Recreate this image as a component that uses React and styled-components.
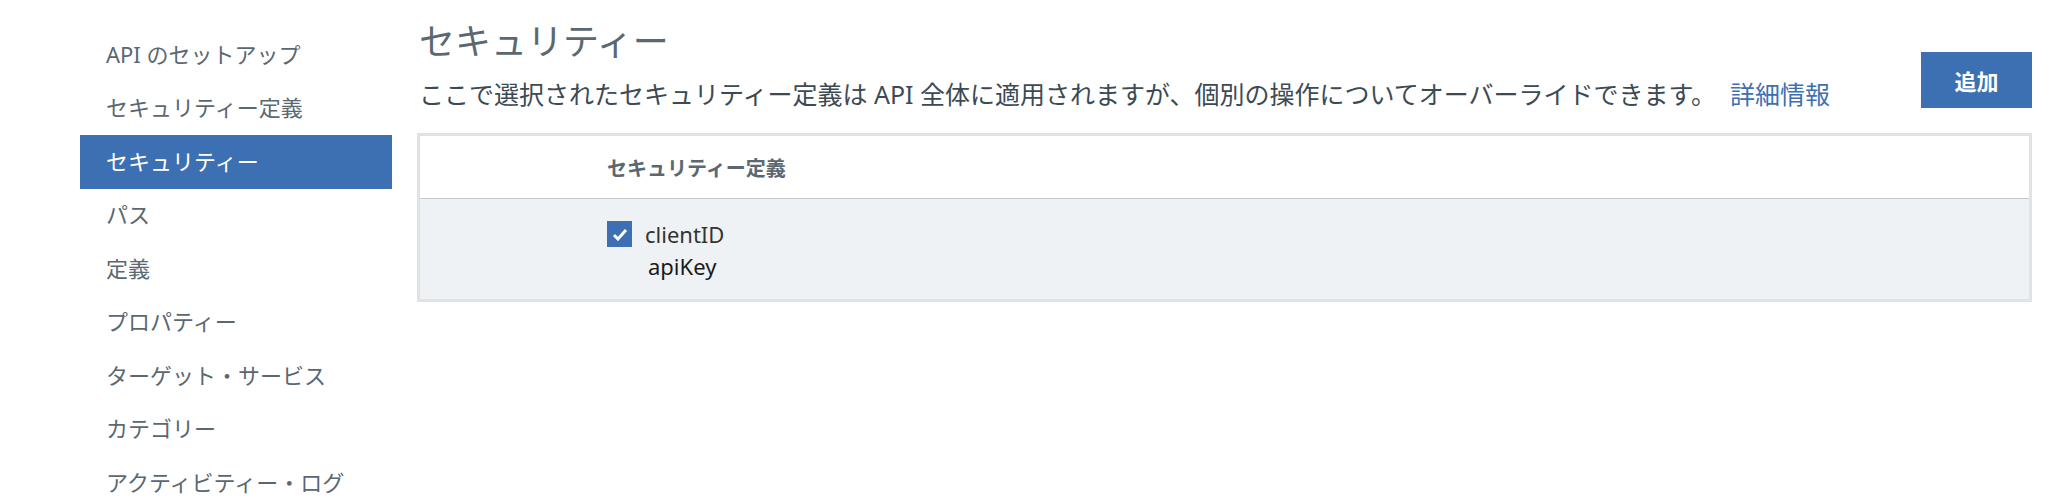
import React from "react";
import styled, { createGlobalStyle } from "styled-components";

const Global = createGlobalStyle`
  html, body { margin: 0; padding: 0; background: #ffffff; }
  body { font-family: "Noto Sans", "Noto Sans CJK JP", sans-serif; }
  * { box-sizing: border-box; }
`;

const Page = styled.div`
  display: flex;
  align-items: flex-start;
  padding-left: 80px;
  padding-right: 28px;
  width: 2060px;
  height: 504px;
  overflow: hidden;
`;

const Sidebar = styled.nav`
  width: 312px;
  flex: none;
  padding-top: 28.25px;
  display: flex;
  flex-direction: column;
`;

const NavItem = styled.div`
  height: 53.5px;
  display: flex;
  align-items: center;
  padding-left: 26px;
  padding-bottom: 5px;
  font-size: 22px;
  color: ${(p) => (p.$active ? "#ffffff" : "#5a6872")};
  background: ${(p) => (p.$active ? "#3d70b2" : "transparent")};
  white-space: nowrap;
`;

const Main = styled.main`
  flex: 1;
  margin-left: 25px;
  padding-top: 20px;
`;

const Header = styled.div`
  display: flex;
  justify-content: space-between;
  align-items: flex-start;
  padding-left: 2px;
`;

const TitleBlock = styled.div`
  display: flex;
  flex-direction: column;
`;

const Title = styled.h1`
  margin: 0;
  font-size: 36px;
  line-height: 44px;
  font-weight: 400;
  color: #5a6872;
`;

const Desc = styled.p`
  margin: 12px 0 0;
  font-size: 25px;
  line-height: 36px;
  color: #3c4a53;
  white-space: nowrap;
`;

const Link = styled.a`
  color: #3d70b2;
  text-decoration: none;
  margin-left: 14px;
`;

const AddButton = styled.button`
  margin-top: 32px;
  width: 111px;
  height: 56px;
  border: none;
  background: #3d70b2;
  color: #ffffff;
  font-family: "Noto Sans", "Noto Sans CJK JP", sans-serif;
  font-size: 22px;
  font-weight: 700;
`;

const Table = styled.div`
  margin-top: 21px;
  border: 3px solid #dfe3e6;
`;

const HeadRow = styled.div`
  display: grid;
  grid-template-columns: 187px 1fr;
  height: 63px;
  background: #ffffff;
  border-bottom: 1px solid #c8c8c8;
  align-items: center;
`;

const HeadCell = styled.div`
  font-size: 20px;
  font-weight: 700;
  color: #5a6872;
`;

const BodyRow = styled.div`
  display: grid;
  grid-template-columns: 187px 1fr;
  height: 100px;
  background: #eef2f5;
  padding-top: 22px;
`;

const Cell = styled.div`
  display: flex;
  flex-direction: column;
`;

const CheckLine = styled.label`
  display: flex;
  align-items: center;
  height: 26px;
  gap: 13px;
  font-size: 22px;
  color: #333333;
`;

const Box = styled.span`
  width: 25px;
  height: 26px;
  background: #3d70b2;
  display: flex;
  align-items: center;
  justify-content: center;
`;

const SubLabel = styled.div`
  margin-top: 6px;
  padding-left: 41px;
  font-size: 22px;
  line-height: 26px;
  color: #1a1a1a;
  font-weight: 400;
`;

const navItems = [
  "API のセットアップ",
  "セキュリティー定義",
  "セキュリティー",
  "パス",
  "定義",
  "プロパティー",
  "ターゲット・サービス",
  "カテゴリー",
  "アクティビティー・ログ",
];

export default function App() {
  return (
    <>
      <Global />
      <Page>
        <Sidebar>
          {navItems.map((t) => (
            <NavItem key={t} $active={t === "セキュリティー"}>
              {t}
            </NavItem>
          ))}
        </Sidebar>
        <Main>
          <Header>
            <TitleBlock>
              <Title>セキュリティー</Title>
              <Desc>
                ここで選択されたセキュリティー定義は API
                全体に適用されますが、個別の操作についてオーバーライドできます。
                <Link href="#">詳細情報</Link>
              </Desc>
            </TitleBlock>
            <AddButton>追加</AddButton>
          </Header>
          <Table>
            <HeadRow>
              <div />
              <HeadCell>セキュリティー定義</HeadCell>
            </HeadRow>
            <BodyRow>
              <div />
              <Cell>
                <CheckLine>
                  <Box>
                    <svg width="16" height="13" viewBox="0 0 16 13">
                      <polyline
                        points="2,7 6,11 14,2"
                        fill="none"
                        stroke="#ffffff"
                        strokeWidth="3"
                      />
                    </svg>
                  </Box>
                  clientID
                </CheckLine>
                <SubLabel>apiKey</SubLabel>
              </Cell>
            </BodyRow>
          </Table>
        </Main>
      </Page>
    </>
  );
}
